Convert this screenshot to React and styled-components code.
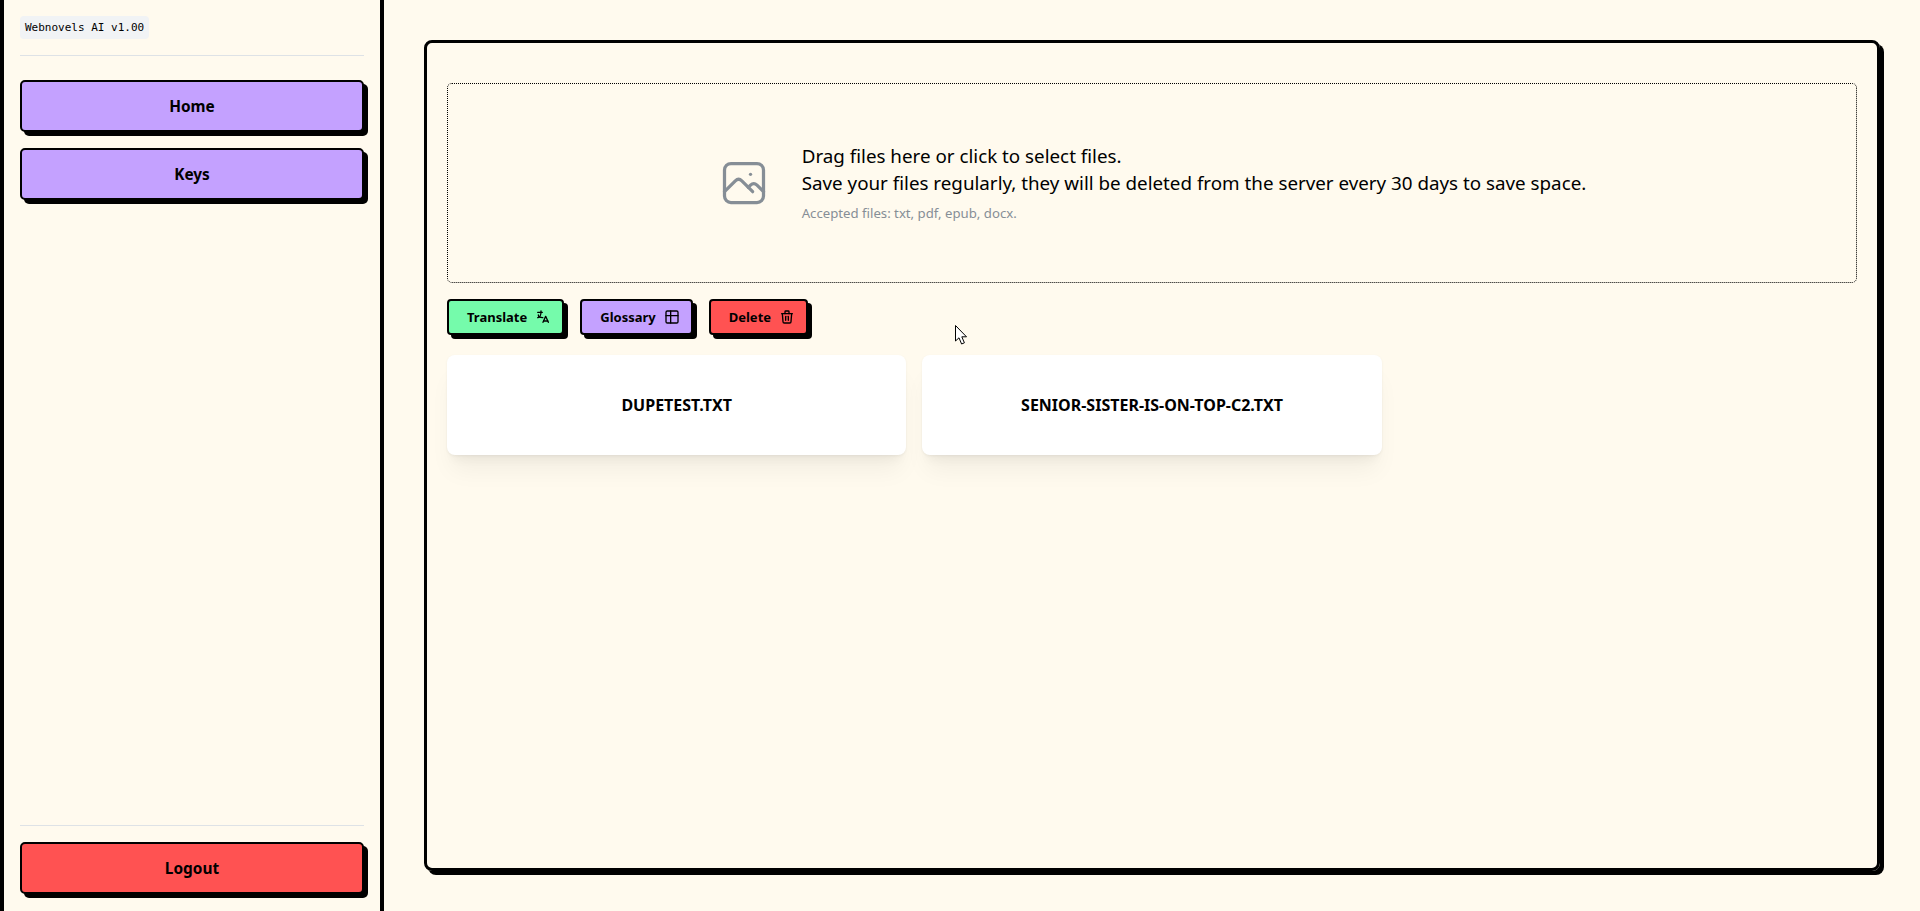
import React from "react";
import styled, { createGlobalStyle } from "styled-components";
import { TbPhoto, TbLanguage, TbTable, TbTrash } from "react-icons/tb";

const Global = createGlobalStyle`
  html, body { margin: 0; padding: 0; height: 100%; background: #fffaee; }
  body { font-family: "Noto Sans", "Open Sans", sans-serif; color: #000; overflow: hidden; }
  * { box-sizing: border-box; }
`;

const Shell = styled.div`
  position: relative;
  display: flex;
  width: 1920px;
  height: 911px;
  background: #fffaee;
`;

const Sidebar = styled.aside`
  width: 384px;
  height: 911px;
  flex: none;
  border-left: 4px solid #000;
  border-right: 4px solid #000;
  padding: 16px 16px 17px;
  display: flex;
  flex-direction: column;
`;

const Badge = styled.code`
  align-self: flex-start;
  font-family: "DejaVu Sans Mono", "Liberation Mono", monospace;
  font-size: 11px;
  line-height: 23px;
  height: 23px;
  padding: 0 5px;
  background: #f1f3f5;
  border-radius: 4px;
  color: #000;
`;

const Divider = styled.div`
  height: 1px;
  background: #dee2e6;
  flex: none;
`;

const TopDivider = styled(Divider)`
  margin: 16px 0 24px;
`;

const NavList = styled.nav`
  flex: 1;
  display: flex;
  flex-direction: column;
  gap: 16px;
`;

const NavButton = styled.button`
  width: 344px;
  height: 52px;
  flex: none;
  border: 2px solid #000;
  border-radius: 5px;
  background: ${(p) => p.$bg};
  box-shadow: 4px 4px 0 #000;
  font: 700 15.4px "Noto Sans", sans-serif;
  color: #000;
`;

const BottomDivider = styled(Divider)`
  margin-bottom: 16px;
`;

const Main = styled.main`
  flex: 1;
  padding: 40px;
  display: flex;
`;

const Panel = styled.section`
  flex: 1;
  border: 3px solid #000;
  border-radius: 8px;
  box-shadow: 4px 4px 0 #000;
  padding: 40px 20px;
`;

const Dropzone = styled.div`
  height: 200px;
  border: 1px dotted #000;
  border-radius: 5px;
  display: flex;
  align-items: center;
  justify-content: center;
  gap: 32px;
`;

const PhotoIcon = styled(TbPhoto)`
  width: 52px;
  height: 52px;
  color: #868e96;
  stroke-width: 1.5;
`;

const DropText = styled.div`
  font-size: 18.8px;
  line-height: 27px;
  color: #000;
`;

const DropHint = styled.div`
  font-size: 13.2px;
  line-height: 20px;
  color: #868e96;
  margin-top: 6px;
`;

const Toolbar = styled.div`
  display: flex;
  gap: 16px;
  margin-top: 16px;
`;

const ActionButton = styled.button`
  height: 36px;
  padding: 0 11px 0 18px;
  border: 2px solid #000;
  border-radius: 4px;
  background: ${(p) => p.$bg};
  box-shadow: 4px 4px 0 #000;
  font: 700 13px "Noto Sans", sans-serif;
  color: #000;
  display: flex;
  align-items: center;
  gap: 8px;
  svg { width: 16px; height: 16px; }
`;

const CardGrid = styled.div`
  display: grid;
  grid-template-columns: repeat(3, 1fr);
  gap: 16px;
  margin-top: 20px;
`;

const FileCard = styled.div`
  height: 100px;
  background: #fff;
  border-radius: 8px;
  box-shadow: 0 1px 3px rgba(0,0,0,0.05), 0 20px 25px -5px rgba(0,0,0,0.05), 0 10px 10px -5px rgba(0,0,0,0.04);
  display: flex;
  align-items: center;
  justify-content: center;
  font-weight: 700;
  font-size: 16px;
  text-transform: uppercase;
`;

const Cursor = styled.svg`
  position: absolute;
  left: 955px;
  top: 325px;
  width: 13px;
  height: 20px;
`;

const PURPLE = "#c4a1ff";
const RED = "#ff5252";
const GREEN = "#75fbab";

export default function App() {
  return (
    <Shell>
      <Global />
      <Sidebar>
        <Badge>Webnovels AI v1.00</Badge>
        <TopDivider />
        <NavList>
          <NavButton $bg={PURPLE}>Home</NavButton>
          <NavButton $bg={PURPLE}>Keys</NavButton>
        </NavList>
        <BottomDivider />
        <NavButton $bg={RED}>Logout</NavButton>
      </Sidebar>
      <Main>
        <Panel>
          <Dropzone>
            <PhotoIcon />
            <div>
              <DropText>
                Drag files here or click to select files.
                <br />
                Save your files regularly, they will be deleted from the server every 30 days to save space.
              </DropText>
              <DropHint>Accepted files: txt, pdf, epub, docx.</DropHint>
            </div>
          </Dropzone>
          <Toolbar>
            <ActionButton $bg={GREEN}>Translate <TbLanguage /></ActionButton>
            <ActionButton $bg={PURPLE}>Glossary <TbTable /></ActionButton>
            <ActionButton $bg={RED}>Delete <TbTrash /></ActionButton>
          </Toolbar>
          <CardGrid>
            <FileCard>dupetest.txt</FileCard>
            <FileCard>senior-sister-is-on-top-c2.txt</FileCard>
          </CardGrid>
        </Panel>
      </Main>
      <Cursor viewBox="0 0 13 20">
        <path d="M0.5 0.5 V16 L4 12.8 L6.6 19 L9.4 17.8 L6.8 11.8 H11.5 Z" fill="#fff" stroke="#000" strokeWidth="1" />
      </Cursor>
    </Shell>
  );
}
